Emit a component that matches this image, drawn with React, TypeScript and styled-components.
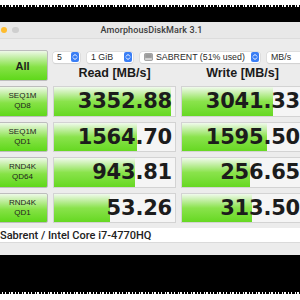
import React from "react";
import styled, { createGlobalStyle } from "styled-components";

const GlobalStyle = createGlobalStyle`
    html, body {
        margin: 0;
        padding: 0;
        background: #ffffff;
    }
    #root {
        width: 300px;
        height: 300px;
        overflow: hidden;
    }
`;

const Frame = styled.div`
    width: 300px;
    height: 300px;
    overflow: hidden;
    display: flex;
    flex-direction: column;
    background: #ffffff;
`;

const Blank = styled.div<{ $h: number }>`
    height: ${(p) => p.$h}px;
    flex: none;
    background: #ffffff;
`;

const Noise = styled.div`
    height: 2px;
    flex: none;
    background: repeating-linear-gradient(
        90deg,
        #000 0 2px,
        #fff 2px 3px,
        #000 3px 5px,
        #fff 5px 6px,
        #000 6px 9px,
        #fff 9px 10px,
        #000 10px 11px,
        #fff 11px 13px
    );
`;

const Black = styled.div<{ $h: number }>`
    height: ${(p) => p.$h}px;
    flex: none;
    background: #000000;
`;

const Window = styled.div`
    width: 328px;
    margin-left: -14px;
    flex: none;
    background: #ececec;
    font-family: "Liberation Sans", Arial, sans-serif;
`;

const TitleBar = styled.div`
    height: 16px;
    display: grid;
    grid-template-columns: 1fr auto 1fr;
    align-items: center;
    padding-left: 3px;
    background: #e8e8e8;
    border-bottom: 1px solid #dcdcdc;
`;

const Lights = styled.div`
    display: flex;
    gap: 5px;
`;

const Light = styled.span<{ $color: string }>`
    width: 6.5px;
    height: 6.5px;
    border-radius: 50%;
    background: ${(p) => p.$color};
`;

const Title = styled.div`
    font-family: Roboto, "Liberation Sans", sans-serif;
    font-weight: 500;
    font-size: 9px;
    color: #3d3d3d;
    letter-spacing: 0.1px;
`;

const Content = styled.div`
    padding: 11px 0 0 11px;
`;

const Grid = styled.div`
    display: grid;
    grid-template-columns: 51px 123px 123px;
    column-gap: 5px;
`;

const TopRow = styled(Grid)`
    height: 28px;
    margin-bottom: 8px;
`;

const Row = styled(Grid)`
    height: 30.5px;
    margin-bottom: 5px;
`;

const GreenButton = styled.div<{ $big?: boolean }>`
    box-sizing: border-box;
    border: 1px solid #bdbdbd;
    border-radius: 2px;
    background: linear-gradient(
        to bottom,
        #eef9e8 0%,
        #c4efa6 22%,
        #86e246 55%,
        #5fd81a 100%
    );
    display: flex;
    flex-direction: column;
    align-items: center;
    justify-content: center;
    color: #1e1e1e;
    font-size: ${(p) => (p.$big ? "11px" : "8px")};
    font-weight: ${(p) => (p.$big ? 700 : 400)};
    line-height: 10px;
    text-align: center;
`;

const HeadArea = styled.div`
    grid-column: 2 / 4;
    display: flex;
    flex-direction: column;
`;

const Selects = styled.div`
    display: flex;
    gap: 7px;
    margin-top: 1.5px;
    height: 11px;
`;

const Select = styled.div<{ $w: number }>`
    width: ${(p) => p.$w}px;
    height: 11px;
    flex: none;
    box-sizing: border-box;
    background: #ffffff;
    border-radius: 2.5px;
    box-shadow: 0 0 0 0.5px #d4d4d4, 0 0.5px 1px rgba(0, 0, 0, 0.12);
    display: flex;
    align-items: center;
    padding-left: 4px;
    padding-right: 1px;
    font-size: 8.8px;
    color: #2a2a2a;
    gap: 3px;
`;

const SelectText = styled.span`
    flex: 1;
    white-space: nowrap;
    overflow: hidden;
`;

const Stepper = styled.span`
    width: 8.5px;
    height: 9.5px;
    flex: none;
    border-radius: 2px;
    background: #3a7ef5;
    display: flex;
    align-items: center;
    justify-content: center;
`;

const Headers = styled.div`
    display: grid;
    grid-template-columns: 123px 123px;
    column-gap: 5px;
    margin-top: 2.5px;
`;

const Header = styled.div`
    text-align: center;
    font-size: 12.5px;
    font-weight: 700;
    line-height: 16px;
    color: #1a1a1a;
`;

const Cell = styled.div`
    position: relative;
    box-sizing: border-box;
    border: 1px solid #d3d3d3;
    background: #f5f5f5;
    overflow: hidden;
`;

const Bar = styled.div`
    position: absolute;
    left: 0;
    top: 0;
    bottom: 0;
    background: linear-gradient(
        to bottom,
        #f0faec 0%,
        #c8f0ad 20%,
        #8ae34c 50%,
        #66d822 100%
    );
`;

const Value = styled.div`
    position: relative;
    height: 100%;
    display: flex;
    align-items: center;
    justify-content: flex-end;
    padding-right: 3px;
    font-family: "DejaVu Sans", Verdana, sans-serif;
    font-weight: 700;
    font-size: 21px;
    color: #1c1c1c;
    letter-spacing: -0.2px;
`;

const Field = styled.div`
    height: 14px;
    width: 307px;
    background: #ffffff;
    display: flex;
    align-items: center;
    padding-left: 3px;
    font-family: Roboto, "Liberation Sans", sans-serif;
    font-weight: 500;
    font-size: 11px;
    color: #222222;
    box-sizing: border-box;
`;

const Bottom = styled.div`
    height: 12px;
    border-top: 1px solid #dadada;
`;

const rows = [
    { id: "seq1m-qd8", name: "SEQ1M", qd: "QD8", read: "3352.88", write: "3041.33", rw: 97, ww: 75 },
    { id: "seq1m-qd1", name: "SEQ1M", qd: "QD1", read: "1564.70", write: "1595.50", rw: 69, ww: 70 },
    { id: "rnd4k-qd64", name: "RND4K", qd: "QD64", read: "943.81", write: "256.65", rw: 67, ww: 56 },
    { id: "rnd4k-qd1", name: "RND4K", qd: "QD1", read: "53.26", write: "313.50", rw: 46, ww: 58 },
];

function StepIcon() {
    return (
        <Stepper>
            <svg width="6" height="8" viewBox="0 0 6 8">
                <path d="M1.2 3.2 L3 1.4 L4.8 3.2" fill="none" stroke="#fff" strokeWidth="1" strokeLinecap="round" strokeLinejoin="round" />
                <path d="M1.2 4.8 L3 6.6 L4.8 4.8" fill="none" stroke="#fff" strokeWidth="1" strokeLinecap="round" strokeLinejoin="round" />
            </svg>
        </Stepper>
    );
}

function DiskIcon() {
    return (
        <svg width="9" height="8" viewBox="0 0 9 8">
            <rect x="0.5" y="0.5" width="8" height="7" rx="1" fill="#b9b9b9" stroke="#7d7d7d" strokeWidth="0.6" />
            <rect x="1.3" y="1.2" width="6.4" height="3.6" fill="#9a9a9a" />
            <rect x="1.3" y="5.4" width="6.4" height="1.3" fill="#e2e2e2" />
        </svg>
    );
}

function App() {
    return (
        <Frame>
            <GlobalStyle />
            <Blank $h={5} />
            <Noise />
            <Black $h={15} />
            <Window>
                <TitleBar>
                    <Lights>
                        <Light $color="#fe5f57" />
                        <Light $color="#febc2e" />
                        <Light $color="#cfcfcf" />
                    </Lights>
                    <Title>AmorphousDiskMark 3.1</Title>
                    <span />
                </TitleBar>
                <Content>
                    <TopRow>
                        <GreenButton $big>All</GreenButton>
                        <HeadArea>
                            <Selects>
                                <Select $w={27}>
                                    <SelectText>5</SelectText>
                                    <StepIcon />
                                </Select>
                                <Select $w={46}>
                                    <SelectText>1 GiB</SelectText>
                                    <StepIcon />
                                </Select>
                                <Select $w={120}>
                                    <DiskIcon />
                                    <SelectText>SABRENT (51% used)</SelectText>
                                    <StepIcon />
                                </Select>
                                <Select $w={45}>
                                    <SelectText>MB/s</SelectText>
                                    <StepIcon />
                                </Select>
                            </Selects>
                            <Headers>
                                <Header>Read [MB/s]</Header>
                                <Header>Write [MB/s]</Header>
                            </Headers>
                        </HeadArea>
                    </TopRow>
                    {rows.map((r) => (
                        <Row key={r.id}>
                            <GreenButton>
                                <span>{r.name}</span>
                                <span>{r.qd}</span>
                            </GreenButton>
                            <Cell>
                                <Bar style={{ width: `${r.rw}%` }} />
                                <Value>{r.read}</Value>
                            </Cell>
                            <Cell>
                                <Bar style={{ width: `${r.ww}%` }} />
                                <Value>{r.write}</Value>
                            </Cell>
                        </Row>
                    ))}
                    <Field>Sabrent / Intel Core i7-4770HQ</Field>
                    <Bottom />
                </Content>
            </Window>
            <Black $h={37} />
            <Noise />
            <Blank $h={6} />
        </Frame>
    );
}

export default App;
